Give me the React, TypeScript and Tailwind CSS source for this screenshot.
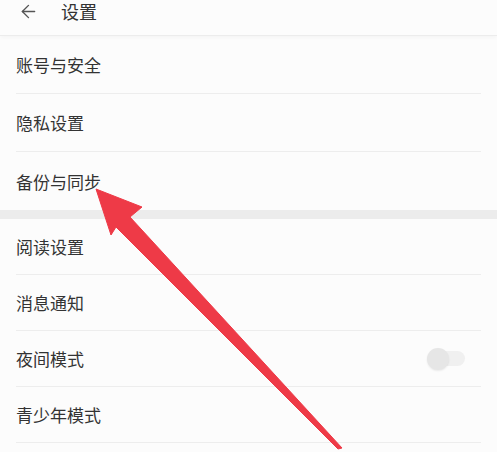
import { ArrowLeft } from 'lucide-react'

type Row = { label: string; toggle?: boolean }

const groupOne: Row[] = [{ label: '账号与安全' }, { label: '隐私设置' }, { label: '备份与同步' }]

const groupTwo: Row[] = [
  { label: '阅读设置' },
  { label: '消息通知' },
  { label: '夜间模式', toggle: true },
  { label: '青少年模式' },
]

function SettingRow({ row, last, tall }: { row: Row; last?: boolean; tall?: boolean }) {
  return (
    <div className="pl-4 pr-4">
      <div
        className={[
          'flex items-center justify-between',
          tall ? 'h-[58px]' : 'h-[56px]',
          last ? '' : 'border-b border-[#ededed]',
        ].join(' ')}
      >
        <span className="text-[17px] leading-none text-[#333333]">{row.label}</span>
        {row.toggle && (
          <span className="relative mr-[16px] flex h-[15px] w-[34px] items-center rounded-full bg-[#f0f0f0]">
            <span className="absolute -left-[4px] h-[22px] w-[22px] rounded-full bg-[#e6e6e6] shadow-[0_1px_2px_rgba(0,0,0,0.08)]" />
          </span>
        )}
      </div>
    </div>
  )
}

export default function App() {
  return (
    <div
      className="relative h-[452px] w-[497px] overflow-hidden bg-[#fcfcfc]"
      style={{ fontFamily: '"Noto Sans CJK SC", "Noto Sans", sans-serif' }}
    >
      <header className="flex h-[36px] items-start gap-[22px] border-b border-[#ececec] pl-[18px] pt-[1px] shadow-[0_2px_4px_rgba(0,0,0,0.03)]">
        <ArrowLeft className="h-[21px] w-[21px] text-[#555555]" strokeWidth={1.6} />
        <span className="text-[18px] leading-[20px] text-[#333333]">设置</span>
      </header>

      <section>
        {groupOne.map((row, i) => (
          <SettingRow key={row.label} row={row} tall last={i === groupOne.length - 1} />
        ))}
      </section>

      <div className="h-[9px] bg-[#ececec]" />

      <section>
        {groupTwo.map((row) => (
          <SettingRow key={row.label} row={row} />
        ))}
      </section>

      <svg className="pointer-events-none absolute left-0 top-0" width="497" height="452" viewBox="0 0 497 452">
        <polygon
          points="96,189 142,207 130,217 342,448 338,449 116,227 111,235"
          fill="#ee3a47"
          stroke="#ee3a47"
          strokeWidth="1"
          strokeLinejoin="round"
        />
      </svg>
    </div>
  )
}
